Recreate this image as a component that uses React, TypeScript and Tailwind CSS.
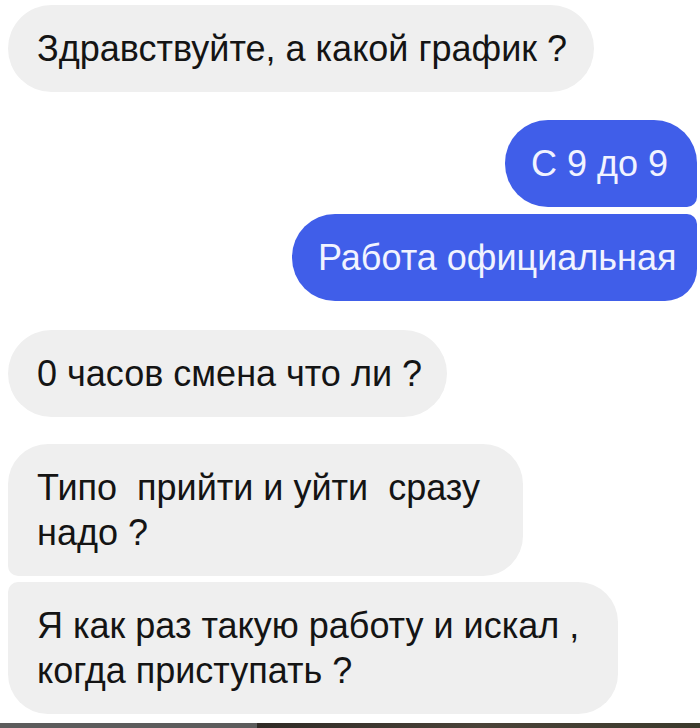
import React from 'react';

type Msg = {
  lines: string[];
  side: 'in' | 'out';
  className: string;
};

const messages: Msg[] = [
  { lines: ['Здравствуйте, а какой график ?'], side: 'in', className: 'mt-[5px] w-[586px] rounded-full' },
  { lines: ['С 9 до 9'], side: 'out', className: 'mt-[28px] w-[192px] rounded-[43px] rounded-br-[10px]' },
  { lines: ['Работа официальная'], side: 'out', className: 'mt-[7px] w-[405px] rounded-l-[43px] rounded-tr-[10px] rounded-br-[32px]' },
  { lines: ['0 часов смена что ли ?'], side: 'in', className: 'mt-[29px] w-[439px] rounded-full' },
  { lines: ['Типо  прийти и уйти  сразу', 'надо ?'], side: 'in', className: 'mt-[27px] w-[515px] rounded-[40px] rounded-bl-[10px]' },
  { lines: ['Я как раз такую работу и искал ,', 'когда приступать ?'], side: 'in', className: 'mt-[6px] w-[610px] rounded-[40px] rounded-tl-[10px]' },
];

const Bubble: React.FC<{ msg: Msg }> = ({ msg }) => {
  const out = msg.side === 'out';
  return (
    <div className={`flex ${out ? 'justify-end' : 'justify-start'}`}>
      <div
        className={`${msg.className} ${
          out ? 'bg-[#405ee9] text-[#f1f3ff] pl-[26px] pr-[30px] text-right' : 'bg-[#efefef] text-[#141414] pl-[29px] pr-[16px]'
        } py-[21px] text-[36px] leading-[45px] whitespace-pre`}
      >
        {msg.lines.map((l, i) => (
          <div key={i}>{l}</div>
        ))}
      </div>
    </div>
  );
};

export default function App() {
  return (
    <div className="w-[700px] h-[728px] bg-white overflow-hidden flex flex-col font-['Liberation_Sans',Arial,sans-serif]">
      <div className="flex flex-col pl-[8px] pr-[3px]">
        {messages.map((m, i) => (
          <Bubble key={i} msg={m} />
        ))}
      </div>

      {/* photo strip peeking in at the bottom */}
      <div className="mt-auto flex h-[5px]">
        <div className="w-[257px] bg-[#5c5c5c]" />
        <div className="flex-1 bg-gradient-to-r from-[#2f2a25] via-[#4a4238] to-[#3b3a2c]" />
      </div>
    </div>
  );
}
